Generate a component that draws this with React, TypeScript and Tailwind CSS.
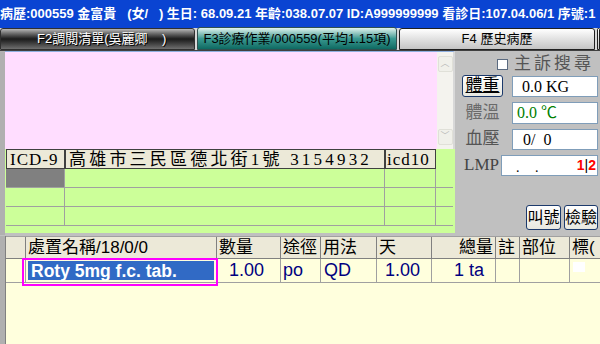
import React from 'react';

const sans = "font-['Liberation_Sans','Noto_Sans_CJK_TC',sans-serif]";
const serif = "font-['Liberation_Serif','Noto_Sans_CJK_TC',serif]";

const cols = [
  { label: '', w: 'w-[20px]' },
  { label: '處置名稱/18/0/0', w: 'w-[191px]' },
  { label: '數量', w: 'w-[64px]' },
  { label: '途徑', w: 'w-[40px]' },
  { label: '用法', w: 'w-[56px]' },
  { label: '天', w: 'w-[55px]' },
  { label: '總量', w: 'w-[64px]', right: true },
  { label: '註', w: 'w-[24px]' },
  { label: '部位', w: 'w-[50px]' },
  { label: '標(', w: 'w-[40px]' },
];

const App: React.FC = () => {
  return (
    <div className={`w-[600px] h-[344px] overflow-hidden bg-[#c0c0c0] flex flex-col ${sans}`}>
      {/* Title bar */}
      <div className="h-[28px] shrink-0 bg-[#0a44d2] text-white font-bold text-[13px] leading-[28px] whitespace-nowrap overflow-hidden">
        病歷:000559 金富貴 &nbsp;&nbsp;(女/ &nbsp;&nbsp;) 生日: 68.09.21 年齡:038.07.07 ID:A999999999 看診日:107.04.06/1 序號:1
      </div>

      {/* Tabs */}
      <div className="h-[23px] shrink-0 flex items-end gap-[2px] bg-[#d8d8d8] border-b border-[#404040] text-[13px] whitespace-nowrap">
        <div className="w-[195px] h-[22px] rounded-t-[3px] border border-[#303030] bg-gradient-to-b from-[#b8b8b8] via-[#1c1c1c] to-[#707070] text-white flex items-center pl-[36px] [text-shadow:1px_1px_0_#000]">
          F2調閱清單(吳麗卿 &nbsp;&nbsp;&nbsp;)
        </div>
        <div className="w-[200px] h-[23px] rounded-t-[3px] border border-[#305050] bg-gradient-to-b from-[#e0f4f0] via-[#3a9a92] to-[#0c6a62] text-black flex items-center justify-center">
          F3診療作業/000559(平均1.15項)
        </div>
        <div className="w-[196px] h-[22px] rounded-t-[3px] border border-[#202020] bg-gradient-to-b from-white to-[#c4c4c4] text-black flex items-center justify-center">
          F4 歷史病歷
        </div>
        <div className="flex-1 h-[22px] rounded-t-[3px] border border-[#202020] bg-gradient-to-b from-white to-[#c4c4c4]" />
      </div>

      {/* Middle section */}
      <div className="h-[184px] shrink-0 flex">
        <div className="w-[455px] flex flex-col border-l-[5px] border-[#b0b0b0]">
          {/* Pink memo + scrollbar */}
          <div className="h-[98px] flex border-t border-[#8fb0e0] border-r-2 border-r-[#d8d8d8]">
            <div className="flex-1 bg-[#ffddff]" />
            <div className="w-[16px] bg-[#f4f3ee] flex flex-col justify-between py-[4px] items-center">
              <div className="w-[15px] h-[16px] rounded-[2px] bg-[#f0f0ea] border border-[#e0e0d8] flex items-center justify-center text-[#b8b8b8] text-[9px]">︿</div>
              <div className="w-[15px] h-[16px] rounded-[2px] bg-[#f0f0ea] border border-[#e0e0d8] flex items-center justify-center text-[#b8b8b8] text-[9px]">﹀</div>
            </div>
          </div>
          {/* ICD table */}
          <div className="h-[84px] bg-[#ccff99] pl-[1px] pr-[2px] flex flex-col">
            <div className={`h-[20px] flex ${serif} text-[17px] leading-[19px] text-black`}>
              <div className="w-[59px] bg-[#ece9d8] border border-[#404040] pl-[3px] tracking-[1px]">ICD-9</div>
              <div className="w-[320px] bg-[#ece9d8] border border-[#404040] pl-[3px] tracking-[3.2px] whitespace-nowrap overflow-hidden">高雄市三民區德北街1號 3154932</div>
              <div className="w-[51px] bg-[#ece9d8] border border-[#404040] pl-[1px] tracking-[1px]">icd10</div>
            </div>
            {[0, 1, 2].map((r) => (
              <div key={r} className="h-[19px] flex border-b border-[#a0a0a0]">
                <div className={`w-[59px] border-r border-[#a0a0a0] ${r === 0 ? 'bg-[#808080]' : ''}`} />
                <div className="w-[320px] border-r border-[#a0a0a0]" />
                <div className="w-[51px] border-r border-[#a0a0a0]" />
              </div>
            ))}
          </div>
        </div>

        {/* Right panel */}
        <div className={`flex-1 flex flex-col pl-[7px] pr-[2px] ${serif}`}>
          <div className="h-[22px] flex items-center pl-[35px] mt-[2px] gap-[6px]">
            <div className="w-[11px] h-[11px] bg-white border border-[#5a6a80]" />
            <span className="text-[17px] text-[#555] tracking-[3px]">主訴搜尋</span>
          </div>
          <div className="h-[22px] flex items-center gap-[9px]">
            <div className="w-[41px] h-[22px] rounded-[3px] border border-[#1c3a6c] bg-gradient-to-b from-white to-[#e8e8e0] text-black text-[17px] leading-[20px] text-center underline">體重</div>
            <div className="flex-1 h-[21px] bg-white border border-[#7f9db9] text-[16px] leading-[19px] pl-[9px]">0.0 KG</div>
          </div>
          <div className="h-[22px] mt-[5px] flex items-center gap-[9px]">
            <div className="w-[41px] text-[17px] text-[#6a6a6a] text-center">體溫</div>
            <div className="flex-1 h-[22px] bg-white border border-[#7f9db9] text-[16px] leading-[20px] pl-[4px] text-[#008000]">0.0 ℃</div>
          </div>
          <div className="h-[22px] mt-[4px] flex items-center gap-[9px]">
            <div className="w-[41px] text-[17px] text-[#555] text-center">血壓</div>
            <div className="flex-1 h-[21px] bg-white border border-[#7f9db9] text-[16px] leading-[19px] pl-[10px]">0/ &nbsp;0</div>
          </div>
          <div className="h-[22px] mt-[4px] flex items-center gap-[8px]">
            <div className="w-[31px] text-[17px] text-[#444] pl-[2px]">LMP</div>
            <div className="flex-1 h-[21px] bg-white border border-[#7f9db9] flex items-center pl-[14px] pr-[1px] text-[14px]">
              <span className="flex-1 tracking-[6px] leading-[16px] pt-[6px]">. .</span>
              <span className={`text-[#ff0000] font-bold text-[14px] ${sans}`}>1<span className="text-black font-normal">|</span>2</span>
            </div>
          </div>
          <div className="flex-1" />
          <div className="flex justify-end gap-[3px] mb-[5px]">
            <div className="w-[35px] h-[25px] rounded-[3px] border border-[#1c3a6c] bg-gradient-to-b from-white to-[#e8e8e0] text-[16px] leading-[23px] text-center">叫號</div>
            <div className="w-[34px] h-[25px] rounded-[3px] border border-[#1c3a6c] bg-gradient-to-b from-white to-[#e8e8e0] text-[16px] leading-[23px] text-center">檢驗</div>
          </div>
        </div>
      </div>

      {/* Order grid */}
      <div className="flex-1 flex pt-[1px]">
        <div className="w-[6px] bg-[#b0b0b0] border-r border-[#808080]" />
        <div className="flex-1 bg-[#ffffdd] flex flex-col overflow-hidden">
          <div className="h-[23px] flex bg-[#ece9d8] border-t border-[#a0a0a0] border-b border-b-[#808080] text-[17px] leading-[22px] text-black whitespace-nowrap">
            {cols.map((c, i) => (
              <div key={i} className={`${c.w} shrink-0 border-r border-[#808080] px-[2px] overflow-hidden ${c.right ? 'text-right' : ''}`}>{c.label}</div>
            ))}
          </div>
          <div className="h-[24px] flex border-b border-[#a0a0a0] text-[18px] leading-[22px] text-[#000080] whitespace-nowrap">
            <div className="w-[20px] shrink-0 border-r border-[#a0a0a0]" />
            <div className="w-[191px] shrink-0 relative border-r border-[#a0a0a0] p-[2px]">
              <div className="absolute left-[-4px] top-[-1px] w-[196px] h-[28px] border-2 border-[#ff00ff]" />
              <div className="h-full bg-[#316ac5] text-white pl-[3px] leading-[21px] font-semibold text-[17.5px]">Roty 5mg f.c. tab.</div>
            </div>
            <div className="w-[64px] shrink-0 border-r border-[#a0a0a0] pl-[12px]">1.00</div>
            <div className="w-[40px] shrink-0 border-r border-[#a0a0a0] pl-[2px]">po</div>
            <div className="w-[56px] shrink-0 border-r border-[#a0a0a0] pl-[3px]">QD</div>
            <div className="w-[55px] shrink-0 border-r border-[#a0a0a0] pl-[8px]">1.00</div>
            <div className="w-[64px] shrink-0 border-r border-[#a0a0a0] text-right pr-[11px]">1 ta</div>
            <div className="w-[24px] shrink-0 border-r border-[#a0a0a0]" />
            <div className="w-[50px] shrink-0 border-r border-[#a0a0a0]" />
            <div className="w-[40px] shrink-0 pl-[3px] pt-[3px]">
              <div className="w-[12px] h-[10px] bg-white" />
            </div>
          </div>
        </div>
      </div>
    </div>
  );
};

export default App;
